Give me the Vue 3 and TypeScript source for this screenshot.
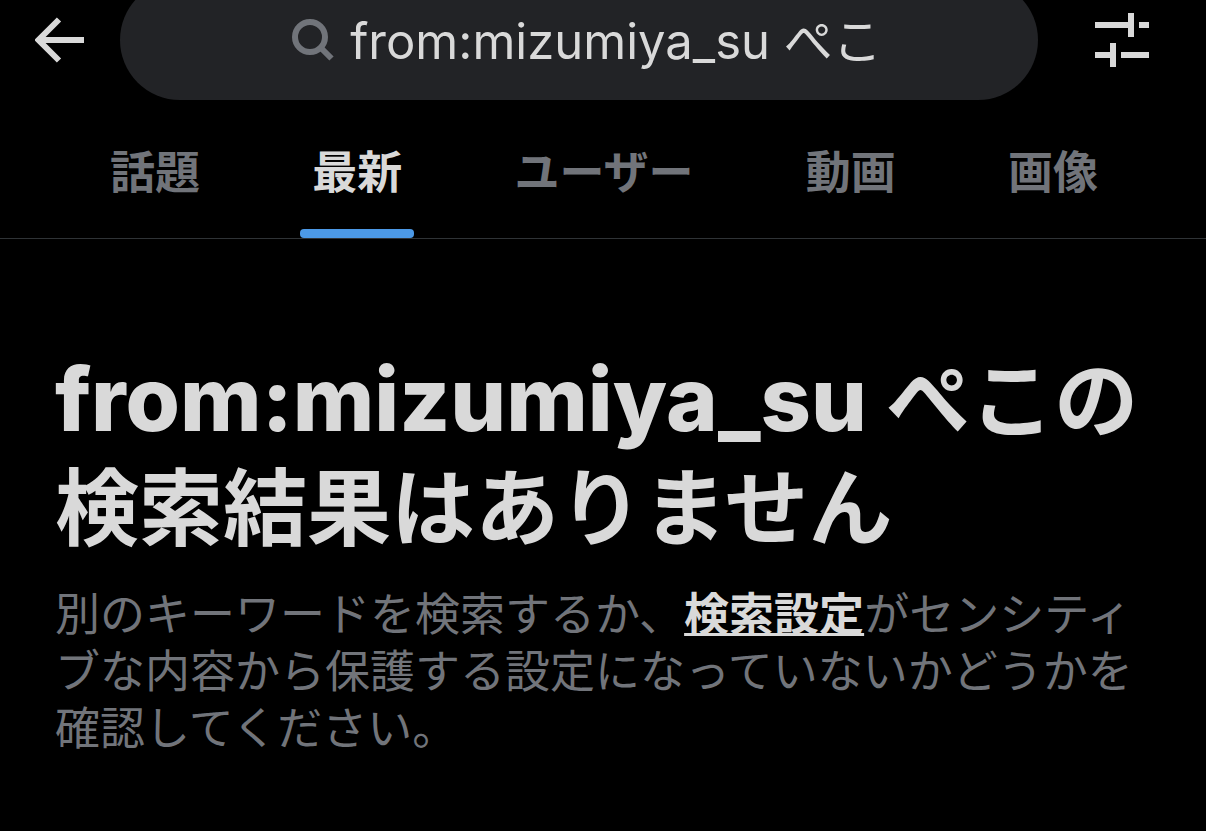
<script setup lang="ts">
import { computed, ref } from 'vue'

interface Tab {
  id: string
  label: string
}

interface Segment {
  text: string
  latin: boolean
}

const tabs: Tab[] = [
  { id: 'top', label: '話題' },
  { id: 'latest', label: '最新' },
  { id: 'users', label: 'ユーザー' },
  { id: 'videos', label: '動画' },
  { id: 'photos', label: '画像' },
]

const activeTab = ref('latest')
const query = ref('from:mizumiya_su ぺこ')
const searched = ref(query.value)

// Latin runs are set slightly larger and heavier than Japanese ones.
const segments = computed<Segment[]>(() =>
  searched.value
    .split(/([\x20-\x7e]+)/)
    .filter((text) => text !== '')
    .map((text) => ({ text, latin: /^[\x20-\x7e]/.test(text) })),
)
</script>

<template>
  <div class="page">
    <header class="bar">
      <button class="icon-button" type="button" aria-label="戻る">
        <svg viewBox="0 0 50 46" width="50" height="46" aria-hidden="true">
          <path d="M24 2.5 3.5 23 24 43.5M4 23H49" fill="none" stroke="currentColor" stroke-width="6" />
        </svg>
      </button>
      <form class="search" role="search" @submit.prevent="searched = query">
        <label class="search-label" for="query" aria-label="検索">
          <svg viewBox="0 0 42 42" width="42" height="42" aria-hidden="true">
            <circle cx="18" cy="18" r="15" fill="none" stroke="currentColor" stroke-width="6" />
            <path d="M28 28 39.5 39.5" fill="none" stroke="currentColor" stroke-width="6" />
          </svg>
        </label>
        <input id="query" v-model="query" class="search-input" type="text" autocomplete="off" />
      </form>
      <button class="icon-button" type="button" aria-label="検索フィルター">
        <svg viewBox="0 0 54 54" width="54" height="54" aria-hidden="true">
          <path
            d="M0 9H33V0H39V24H33V15H0ZM44 9H54V15H44ZM0 39H15V30H21V54H15V45H0ZM26 39H54V45H26Z"
            fill="currentColor"
          />
        </svg>
      </button>
    </header>

    <nav class="tabs" role="tablist" aria-label="検索結果">
      <button
        v-for="tab in tabs"
        :key="tab.id"
        class="tab"
        :class="{ active: tab.id === activeTab }"
        type="button"
        role="tab"
        :aria-selected="tab.id === activeTab"
        @click="activeTab = tab.id"
      >
        {{ tab.label }}
      </button>
    </nav>

    <main class="empty">
      <h1 class="title"><span v-for="(segment, i) in segments" :key="i" :class="{ latin: segment.latin }">{{ segment.text }}</span>の検索結果はありません</h1>
      <p class="hint">
        別のキーワードを検索するか、<a class="link" href="#settings">検索設定</a>がセンシティブな内容から保護する設定になっていないかどうかを確認してください。
      </p>
    </main>
  </div>
</template>

<style>
html,
body {
  background: #000;
}
</style>

<style scoped>
.page {
  min-height: 100vh;
  display: flow-root;
  background: #000;
  color: #d9d9d9;
  font-family: Inter, 'Noto Sans CJK JP', sans-serif;
}

button {
  border: 0;
  padding: 0;
  background: none;
  color: inherit;
  font: inherit;
  cursor: pointer;
}

svg {
  display: block;
}

/* The bar is scrolled partly past the top edge. */
.bar {
  display: flex;
  align-items: center;
  gap: 35px;
  height: 120px;
  margin-top: -20px;
  padding: 0 57px 0 35px;
}

.icon-button {
  flex: none;
}

.search {
  flex: 1;
  min-width: 0;
  box-sizing: border-box;
  height: 120px;
  margin-right: 22px;
  padding-left: 16px;
  display: flex;
  align-items: center;
  justify-content: center;
  gap: 16px;
  border-radius: 60px;
  background: #222326;
}

.search-label {
  flex: none;
  color: #71747a;
}

.search-input {
  field-sizing: content;
  min-width: 0;
  border: 0;
  padding: 4px 0 0;
  outline: 0;
  background: none;
  color: inherit;
  font: inherit;
  font-size: 49px;
  line-height: 72px;
}

.tabs {
  display: flex;
  padding: 0 52px 0 54px;
  border-bottom: 1px solid #2f3336;
}

.tab {
  position: relative;
  flex: 1 1 auto;
  height: 138px;
  padding-top: 8px;
  color: #71747a;
  font-size: 45px;
  font-weight: 700;
  line-height: 60px;
}

.tab.active {
  color: #d9d9d9;
}

.tab.active::after {
  content: '';
  position: absolute;
  bottom: 0;
  left: 50%;
  width: 114px;
  height: 9px;
  margin-left: -57px;
  border-radius: 4px;
  background: #4c99e6;
}

.empty {
  padding: 106px 54px 72px 55px;
}

.title {
  margin: 0;
  font-size: 84px;
  font-weight: 700;
  line-height: 108px;
  word-break: break-all;
}

.latin {
  font-size: 88px;
  font-weight: 800;
}

.hint {
  margin: 23px 0 0;
  color: #71747a;
  font-size: 45px;
  line-height: 57px;
}

.link {
  color: #d9d9d9;
  font-weight: 700;
  text-decoration: underline;
  text-decoration-thickness: 3px;
  text-decoration-skip-ink: none;
}
</style>
